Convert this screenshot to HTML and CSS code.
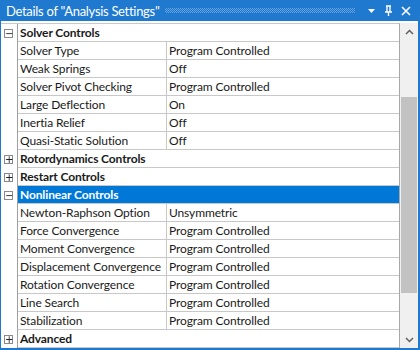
FILE: index.html
```html
<!DOCTYPE html>
<html lang="en">
<head>
    <meta charset="UTF-8">
    <title>Details of "Analysis Settings"</title>
    <link rel="stylesheet" href="styles.css">
</head>
<body>
    <div class="window">
        <div class="titlebar">
            <span class="title">Details of "Analysis Settings"</span>
            <span class="grip"></span>
            <span class="tool">
                <svg width="9" height="9" viewBox="0 0 9 9"><path d="M1 3h7L4.5 7z" fill="#fff"/></svg>
            </span>
            <span class="tool">
                <svg width="9" height="12" viewBox="0 0 9 12"><path d="M2 1h5M3 1v6M6 1v6M1 7h7M4.5 7v4" stroke="#fff" stroke-width="1.4" fill="none"/></svg>
            </span>
            <span class="tool">
                <svg width="10" height="10" viewBox="0 0 10 10"><path d="M1 1l8 8M9 1l-8 8" stroke="#fff" stroke-width="1.6"/></svg>
            </span>
        </div>
        <div class="content">
            <div class="grid">
                <div class="row section">
                    <div class="gutter"><span class="toggle">&minus;</span></div>
                    <div class="head">Solver Controls</div>
                </div>
                <div class="row"><div class="gutter"></div><div class="name">Solver Type</div><div class="value">Program Controlled</div></div>
                <div class="row"><div class="gutter"></div><div class="name">Weak Springs</div><div class="value">Off</div></div>
                <div class="row"><div class="gutter"></div><div class="name">Solver Pivot Checking</div><div class="value">Program Controlled</div></div>
                <div class="row"><div class="gutter"></div><div class="name">Large Deflection</div><div class="value">On</div></div>
                <div class="row"><div class="gutter"></div><div class="name">Inertia Relief</div><div class="value">Off</div></div>
                <div class="row"><div class="gutter"></div><div class="name">Quasi-Static Solution</div><div class="value">Off</div></div>
                <div class="row section">
                    <div class="gutter"><span class="toggle">+</span></div>
                    <div class="head">Rotordynamics Controls</div>
                </div>
                <div class="row section">
                    <div class="gutter"><span class="toggle">+</span></div>
                    <div class="head">Restart Controls</div>
                </div>
                <div class="row section selected">
                    <div class="gutter"><span class="toggle">&minus;</span></div>
                    <div class="head">Nonlinear Controls</div>
                </div>
                <div class="row"><div class="gutter"></div><div class="name">Newton-Raphson Option</div><div class="value">Unsymmetric</div></div>
                <div class="row"><div class="gutter"></div><div class="name">Force Convergence</div><div class="value">Program Controlled</div></div>
                <div class="row"><div class="gutter"></div><div class="name">Moment Convergence</div><div class="value">Program Controlled</div></div>
                <div class="row"><div class="gutter"></div><div class="name">Displacement Convergence</div><div class="value">Program Controlled</div></div>
                <div class="row"><div class="gutter"></div><div class="name">Rotation Convergence</div><div class="value">Program Controlled</div></div>
                <div class="row"><div class="gutter"></div><div class="name">Line Search</div><div class="value">Program Controlled</div></div>
                <div class="row"><div class="gutter"></div><div class="name">Stabilization</div><div class="value">Program Controlled</div></div>
                <div class="row section">
                    <div class="gutter"><span class="toggle">+</span></div>
                    <div class="head">Advanced</div>
                </div>
            </div>
            <div class="scrollbar">
                <div class="arrow">
                    <svg width="9" height="6" viewBox="0 0 9 6"><path d="M1 5l3.5-3.5L8 5" stroke="#606060" stroke-width="1.5" fill="none"/></svg>
                </div>
                <div class="track"><div class="thumb"></div></div>
                <div class="arrow">
                    <svg width="9" height="6" viewBox="0 0 9 6"><path d="M1 1l3.5 3.5L8 1" stroke="#606060" stroke-width="1.5" fill="none"/></svg>
                </div>
            </div>
        </div>
    </div>
</body>
</html>
```

FILE: styles.css
```css
body {
    margin: 0;
    font-family: Lato, "Liberation Sans", sans-serif;
    font-size: 12px;
    color: #1a1a1a;
}
.window {
    width: 420px;
    height: 350px;
    box-sizing: border-box;
    border: 2px solid #1e79cf;
    border-top: none;
    border-left-width: 1px;
    background: #fff;
    display: flex;
    flex-direction: column;
    overflow: hidden;
}
.titlebar {
    height: 21px;
    margin-left: -1px;
    margin-right: -2px;
    background: #1e79cf;
    color: #fff;
    display: flex;
    align-items: center;
    padding: 0 6px 0 6px;
}
.title {
    font-size: 13px;
    letter-spacing: -0.3px;
    white-space: nowrap;
}
.grip {
    flex: 1;
    height: 5px;
    margin: 0 8px 0 6px;
    background: repeating-conic-gradient(rgba(255, 255, 255, 0.3) 0 25%, transparent 0 50%);
    background-size: 2px 2px;
}
.tool {
    width: 17px;
    display: flex;
    justify-content: center;
    align-items: center;
}
.content {
    flex: 1;
    display: flex;
    padding-top: 2px;
    min-height: 0;
}
.grid {
    width: 399px;
    box-sizing: border-box;
    border-top: 1px solid #c8c8c8;
    border-right: 1px solid #a8a8a8;
    overflow: hidden;
    letter-spacing: -0.12px;
}
.row {
    display: flex;
    height: 18px;
}
.gutter {
    width: 16px;
    flex: none;
    border-right: 1px solid #a0a0a0;
    display: flex;
    align-items: center;
    justify-content: center;
}
.toggle {
    width: 7px;
    height: 7px;
    border: 1px solid #8a8a8a;
    font-size: 10px;
    line-height: 7px;
    text-align: center;
    font-family: "DejaVu Sans", sans-serif;
    color: #222;
    margin-left: -1px;
}
.name,
.value,
.head {
    border-bottom: 1px solid #c8c8c8;
    padding-left: 2px;
    line-height: 17px;
    white-space: nowrap;
}
.name {
    width: 146px;
    flex: none;
    border-right: 1px solid #c8c8c8;
}
.value {
    flex: 1;
}
.head {
    flex: 1;
    font-weight: bold;
}
.selected .head {
    background: #0078d7;
    color: #fff;
}
.scrollbar {
    width: 18px;
    background: #f0f0f0;
    display: flex;
    flex-direction: column;
}
.arrow {
    height: 17px;
    display: flex;
    align-items: center;
    justify-content: center;
}
.track {
    flex: 1;
    padding-top: 57px;
}
.thumb {
    margin: 0 1px;
    height: 196px;
    background: #c2c2c2;
}
```
